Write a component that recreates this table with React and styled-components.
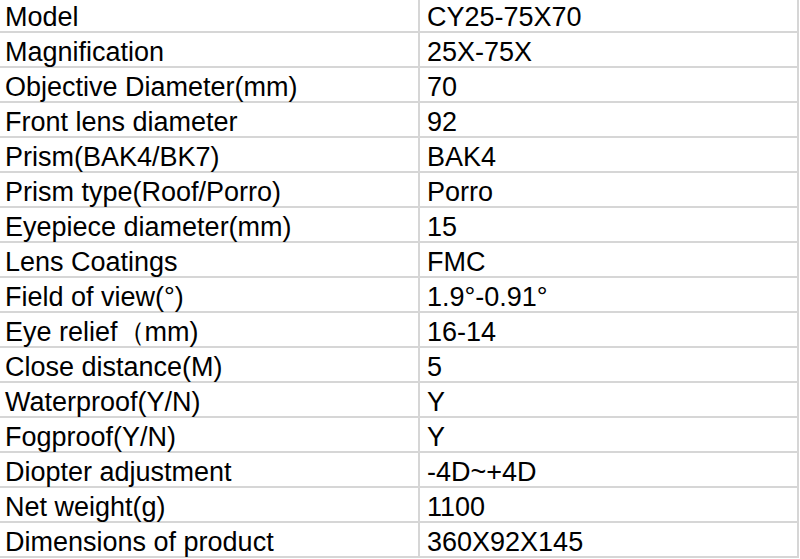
import React from 'react';
import styled, { createGlobalStyle } from 'styled-components';

const GlobalStyle = createGlobalStyle`
  html, body {
    margin: 0;
    padding: 0;
    background: #ffffff;
    overflow: hidden;
  }
`;

const specs = [
  ['Model', 'CY25-75X70'],
  ['Magnification', '25X-75X'],
  ['Objective Diameter(mm)', '70'],
  ['Front lens diameter', '92'],
  ['Prism(BAK4/BK7)', 'BAK4'],
  ['Prism type(Roof/Porro)', 'Porro'],
  ['Eyepiece diameter(mm)', '15'],
  ['Lens Coatings', 'FMC'],
  ['Field of view(°)', '1.9°-0.91°'],
  ['Eye relief（mm)', '16-14'],
  ['Close distance(M)', '5'],
  ['Waterproof(Y/N)', 'Y'],
  ['Fogproof(Y/N)', 'Y'],
  ['Diopter adjustment', '-4D~+4D'],
  ['Net weight(g)', '1100'],
  ['Dimensions of product', '360X92X145'],
];

// sheet starts a little above the viewport, like a cropped spreadsheet
const Sheet = styled.div`
  width: 797px;
  margin-top: -2px;
  border-right: 2px solid #d6d6d6;
  font-family: "Liberation Sans", Arial, sans-serif;
  font-size: 27px;
  color: #000;
`;

const Row = styled.div`
  display: grid;
  grid-template-columns: 420px 1fr;
  height: 35px;
  box-sizing: border-box;
  border-bottom: 2px solid #d6d6d6;
`;

const Cell = styled.div`
  padding: 6px 0 0 ${p => (p.$value ? '7px' : '5px')};
  line-height: 27px;
  white-space: nowrap;
  border-right: ${p => (p.$value ? 'none' : '2px solid #d6d6d6')};
`;

export default function App() {
  return (
    <>
      <GlobalStyle />
      <Sheet>
        {specs.map(([name, value]) => (
          <Row key={name}>
            <Cell>{name}</Cell>
            <Cell $value>{value}</Cell>
          </Row>
        ))}
      </Sheet>
    </>
  );
}
